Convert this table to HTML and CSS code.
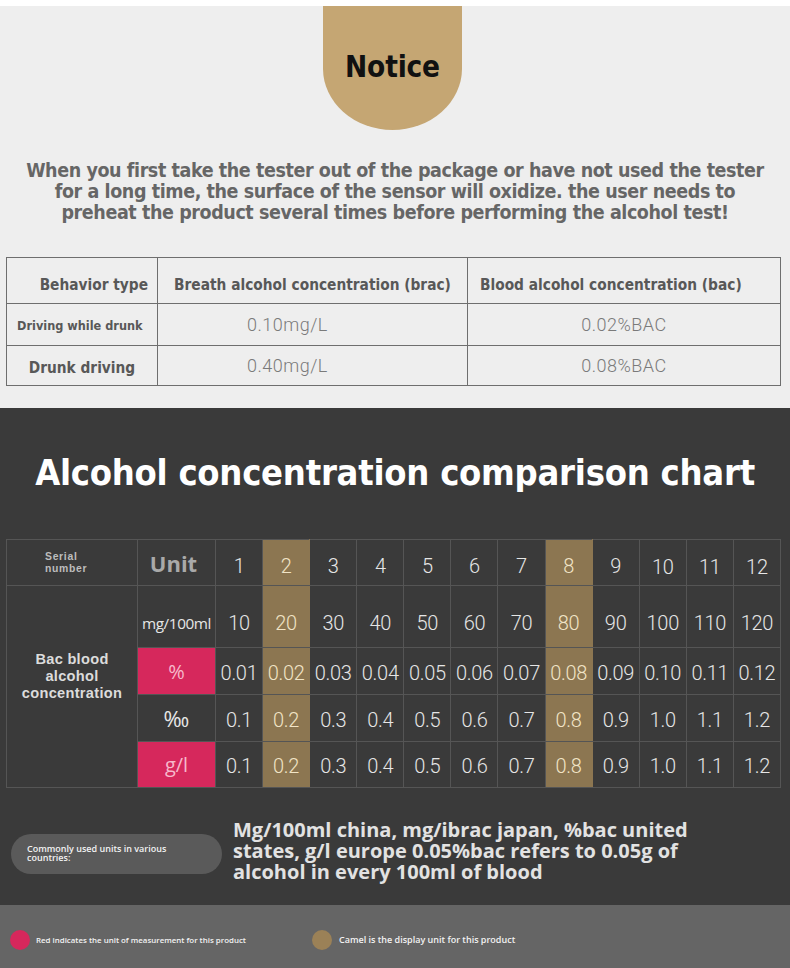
FILE: index.html
```html
<!DOCTYPE html>
<html>
<head>
<meta charset="utf-8">
<link rel="stylesheet" href="styles.css">
</head>
<body>
<div class="strip"></div>
<section class="notice">
  <div class="pill"><span>Notice</span></div>
  <p class="intro">When you first take the tester out of the package or have not used the tester for a long time, the surface of the sensor will oxidize. the user needs to preheat the product several times before performing the alcohol test!</p>
  <table class="limits">
    <colgroup><col class="c1"><col class="c2"><col class="c3"></colgroup>
    <tr class="h">
      <th class="bt">Behavior type</th>
      <th class="br">Breath alcohol concentration (brac)</th>
      <th class="bl">Blood alcohol concentration (bac)</th>
    </tr>
    <tr class="r1">
      <td class="lab small">Driving while drunk</td>
      <td class="val v1">0.10mg/L</td>
      <td class="val v2">0.02%BAC</td>
    </tr>
    <tr class="r2">
      <td class="lab">Drunk driving</td>
      <td class="val v1">0.40mg/L</td>
      <td class="val v2">0.08%BAC</td>
    </tr>
  </table>
</section>
<section class="chart">
  <h1>Alcohol concentration comparison chart</h1>
  <table class="grid">
    <colgroup><col class="g1"><col class="g2"><col span="12" class="gn"></colgroup>
    <tr class="rh">
      <th class="serial"><span>Serial</span><span>number</span></th>
      <th class="unit">Unit</th>
      <td>1</td><td class="camel">2</td><td>3</td><td>4</td><td>5</td><td>6</td><td>7</td><td class="camel">8</td><td>9</td><td class="lo">10</td><td class="lo">11</td><td class="lo">12</td>
    </tr>
    <tr class="rmg">
      <th class="bac" rowspan="4"><span>Bac blood</span><span>alcohol</span><span>concentration</span></th>
      <th class="u mg">mg/100ml</th>
      <td>10</td><td class="camel">20</td><td>30</td><td>40</td><td>50</td><td>60</td><td>70</td><td class="camel">80</td><td>90</td><td>100</td><td>110</td><td>120</td>
    </tr>
    <tr class="rp">
      <th class="u red">%</th>
      <td>0.01</td><td class="camel">0.02</td><td>0.03</td><td>0.04</td><td>0.05</td><td>0.06</td><td>0.07</td><td class="camel">0.08</td><td>0.09</td><td>0.10</td><td>0.11</td><td>0.12</td>
    </tr>
    <tr class="rpm">
      <th class="u permil">‰</th>
      <td>0.1</td><td class="camel">0.2</td><td>0.3</td><td>0.4</td><td>0.5</td><td>0.6</td><td>0.7</td><td class="camel">0.8</td><td>0.9</td><td>1.0</td><td>1.1</td><td>1.2</td>
    </tr>
    <tr class="rg">
      <th class="u red">g/l</th>
      <td>0.1</td><td class="camel">0.2</td><td>0.3</td><td>0.4</td><td>0.5</td><td>0.6</td><td>0.7</td><td class="camel">0.8</td><td>0.9</td><td>1.0</td><td>1.1</td><td>1.2</td>
    </tr>
  </table>
  <div class="note">
    <div class="tag"><span>Commonly used units in various countries:</span></div>
    <p class="note-text">Mg/100ml china, mg/ibrac japan, %bac united states, g/l europe 0.05%bac refers to 0.05g of alcohol in every 100ml of blood</p>
  </div>
</section>
<section class="legend">
  <div class="item first"><span class="dot red-dot"></span><span class="lt1">Red indicates the unit of measurement for this product</span></div>
  <div class="item"><span class="dot camel-dot"></span><span class="lt2">Camel is the display unit for this product</span></div>
</section>
</body>
</html>
```
FILE: styles.css
```css
html, body { margin: 0; padding: 0; }
body { width: 790px; background: #eeeeee; font-family: "DejaVu Sans Condensed", "Liberation Sans", sans-serif; }
.strip { height: 6px; background: #ffffff; }

.notice { height: 402px; background: #eeeeee; display: flex; flex-direction: column; align-items: center; }
.pill { align-self: flex-start; margin-left: 323px; width: 139px; height: 124px; background: #c5a673; border-radius: 0 0 70px 70px / 0 0 62px 62px; display: flex; justify-content: center; align-items: center; }
.pill span { font-weight: 700; font-size: 29.5px; color: #111; margin-top: -2px; letter-spacing: -0.2px; }
.intro { margin: 30px 0 0; width: 742px; text-align: center; font-weight: 700; font-size: 19.5px; letter-spacing: -0.42px; line-height: 21px; color: #666666; }

.limits { align-self: flex-start; margin: 34px 0 0 6px; width: 774px; border-collapse: collapse; table-layout: fixed; color: #585858; }
.limits .c1 { width: 151px; } .limits .c2 { width: 310px; } .limits .c3 { width: 313px; }
.limits th, .limits td { border: 1px solid #6e6e6e; padding: 0; }
.limits .h { height: 46px; }
.limits .r1 { height: 42px; }
.limits .r2 { height: 40px; }
.limits th { font-size: 15.3px; font-weight: 700; padding-top: 8px; white-space: nowrap; }
.limits .bt { text-align: right; padding-right: 9px; }
.limits .br { text-align: center; }
.limits .bl { text-align: left; padding-left: 12px; }
.limits .lab { font-weight: 700; font-size: 15.3px; text-align: center; padding-top: 4px; }
.limits .lab.small { font-size: 12.6px; text-align: left; padding-left: 10px; padding-top: 2px; }
.limits .val { font-family: Roboto, "Liberation Sans", sans-serif; font-weight: 300; font-size: 18px; color: #7a7a7a; letter-spacing: 0.5px; }
.limits .v1 { padding-left: 89px; }
.limits .v2 { text-align: center; }

.chart { height: 497px; background: #3a3a3a; display: flex; flex-direction: column; align-items: center; }
.chart h1 { margin: 41px 0 0; height: 48px; font-size: 36px; letter-spacing: -0.25px; line-height: 48px; font-weight: 700; color: #ffffff; white-space: nowrap; }
.grid { align-self: flex-start; margin: 42px 0 0 6px; width: 774px; border-collapse: collapse; table-layout: fixed; }
.grid .g1 { width: 131px; } .grid .g2 { width: 78px; } .grid .gn { width: 47.08px; }
.grid th, .grid td { border: 1px solid #555555; padding: 0; text-align: center; }
.grid td { font-family: Roboto, "Liberation Sans", sans-serif; font-weight: 300; font-size: 20px; color: #e6e6e6; letter-spacing: -0.3px; padding-top: 3px; }
.grid .rh { height: 46px; }
.grid .rh td { padding-top: 6px; }
.grid .rh td.lo { padding-top: 9px; }
.grid .rmg { height: 62px; }
.grid .rp, .grid .rpm { height: 47px; }
.grid .rg { height: 46px; }
.grid .rmg td, .grid .rmg .mg { padding-top: 13px; }
.grid .camel { background: #8c7651; color: #f1e4c6; border-left-color: #8c7651; border-right-color: #8c7651; }
.grid .serial { font-family: "Liberation Sans", sans-serif; font-weight: 700; font-size: 10.4px; line-height: 12px; color: #bdbdbd; text-align: left; padding-left: 38px; letter-spacing: 0.7px; }
.grid .serial span { display: block; height: 12px; }
.grid .unit { font-family: "Open Sans", sans-serif; font-weight: 700; font-size: 22px; color: #a9a9a9; padding: 0 6px 0 0; }
.grid .bac { font-family: "Liberation Sans", sans-serif; font-weight: 700; font-size: 14.6px; line-height: 17px; color: #dcdcdc; padding-bottom: 20px; letter-spacing: 0.3px; }
.grid .bac span { display: block; height: 17px; }
.grid .u { font-family: "Open Sans", sans-serif; font-weight: 400; color: #e6e6e6; }
.grid .mg { font-size: 15.3px; letter-spacing: -0.4px; }
.grid .red { background: #d6285c; color: #f6b8cb; font-size: 20px; font-weight: 400; }
.grid .permil { font-size: 22px; }

.note { width: 790px; display: flex; align-items: flex-start; margin-top: 31px; }
.tag { margin: 15px 0 0 11px; width: 211px; height: 40px; border-radius: 20px; background: #5a5a5a; box-sizing: border-box; padding: 10px 50px 0 16px; font-family: "Open Sans", sans-serif; font-weight: 600; font-size: 9px; line-height: 9px; color: #f2f2f2; }
.note-text { margin: 0 0 0 11px; width: 470px; font-family: "Open Sans", sans-serif; font-weight: 700; font-size: 20px; line-height: 21px; color: #e2e2e2; }

.legend { height: 63px; box-sizing: border-box; padding-top: 6px; background: #656565; display: flex; align-items: center; }
.item { display: flex; align-items: center; font-family: "Open Sans", sans-serif; font-weight: 600; color: #f2f2f2; }
.item.first { margin-left: 10px; width: 302px; }
.lt1 { font-size: 7.9px; }
.lt2 { font-size: 9px; }
.dot { width: 20px; height: 20px; border-radius: 50%; margin-right: 6px; }
.red-dot { background: #d6285c; }
.camel-dot { background: #9b8157; margin-right: 7px; }
```
